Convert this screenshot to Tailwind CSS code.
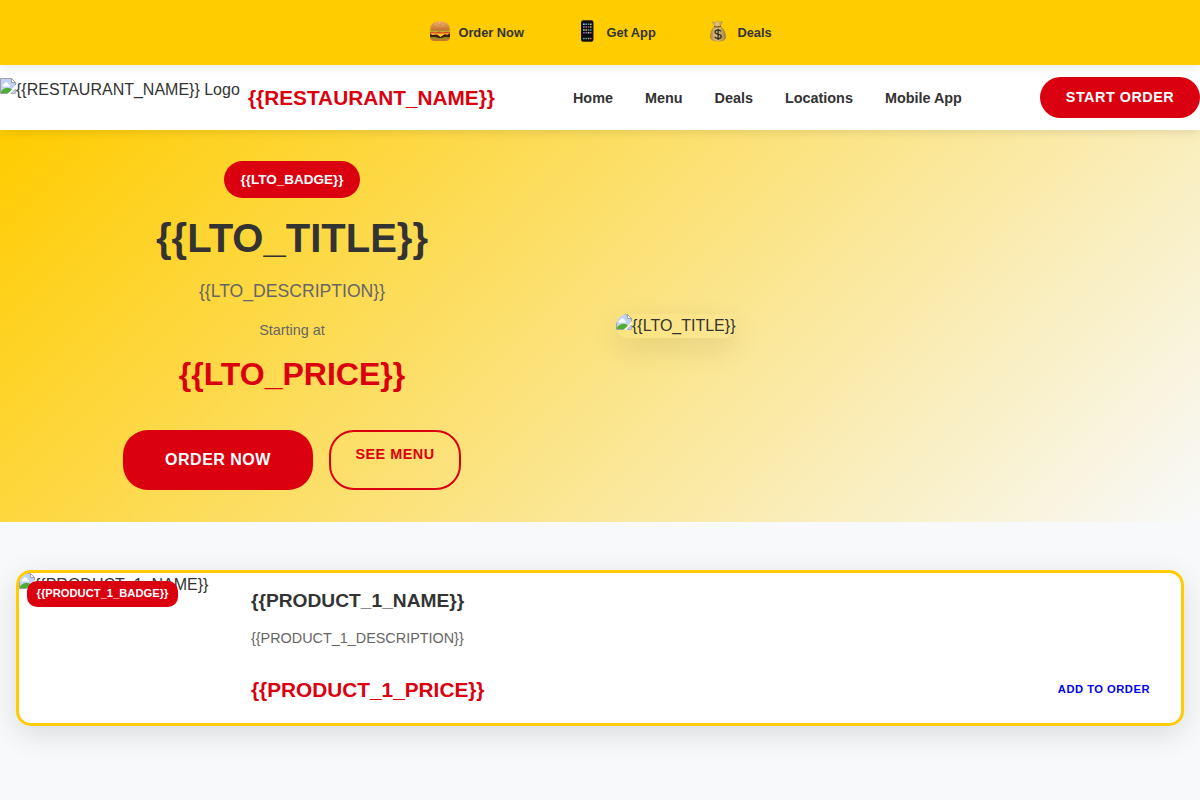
<!DOCTYPE html>
<html lang="en">
<head>
<meta charset="utf-8">
<title>{{RESTAURANT_NAME}}</title>
<script src="https://cdn.jsdelivr.net/npm/@tailwindcss/browser@4"></script>
</head>
<body class="bg-[#f8f9fa] font-['Liberation_Sans',Arial,sans-serif] text-[#333333] text-base leading-6 overflow-hidden h-[800px]">
<svg class="absolute w-0 h-0" aria-hidden="true">
  <symbol id="broken" viewBox="0 0 16 16">
    <path d="M0.5 0.5H11.5L15.5 4.5V7.500L7.500 15.500H0.5Z" fill="#c0d3f5"/>
    <path d="M2.500 8.500Q2 6.500 4 6.200Q4.500 4 6.500 4.300Q8.500 4.500 8.500 6.500Q10.500 6.800 10 8.500Z" fill="#fff"/>
    <path d="M1 15.200V13.500Q4 9.800 7.500 9.800Q10.500 10 12 11.500L8 15.200Z" fill="#4caf32"/>
    <path d="M0.500 15.500V0.500H11.500L15.500 4.500V7M0.500 15.500H7.500" fill="none" stroke="#a0a0a0"/>
    <path d="M11.500 0.500V4.500H15.500Z" fill="#fff" stroke="#a0a0a0"/>
    <path d="M8 16L16 8V10.500L10.500 16Z" fill="#fff"/>
    <path d="M11 15.500L15.500 11V15.500Z" fill="#c0d3f5" stroke="#a0a0a0" stroke-width=".7"/>
  </symbol>
  <linearGradient id="bunFill" x2="0" y2="1"><stop stop-color="#efad62"/><stop offset="1" stop-color="#c06f2a"/></linearGradient>
  <linearGradient id="bagFill" x2="1" y2="0"><stop stop-color="#b48a45"/><stop offset=".45" stop-color="#e3c684"/><stop offset="1" stop-color="#a67b3b"/></linearGradient>
</svg>
<div class="relative z-30 h-[65px] bg-[#ffcc00] shadow-[0_2px_10px_rgba(0,0,0,0.1)] flex justify-center items-center text-[12.8px] font-bold leading-5">
  <div class="flex items-center gap-[7px] w-[148px]">
    <svg class="w-[22px] h-[22px] ml-px -mt-1" viewBox="0 0 22 22">
      <path d="M1.200 15.500H20.800V18Q20.300 21 17 21H5Q1.700 21 1.200 18Z" fill="#c8772f"/>
      <path d="M1 13.300H21V16.500Q20 18.500 17 18.500H5Q2 18.500 1 16.500Z" fill="#3f1c0c"/>
      <path d="M1 12.800H21L18.500 14.800L15.500 14.200L11.500 17L8 14.500L3 15Z" fill="#ffc52c"/>
      <path d="M.8 11.500Q11 10.500 21.200 11.500Q21.500 13 20 13.200Q11 13.800 2 13.200Q.5 13 .8 11.500Z" fill="#d84a28"/>
      <path d="M.6 10.300Q11 8.800 21.400 10.300L20.500 12L17 11.700L14 12.400L10 11.600L6 12.400L3 11.600L1.200 12.200Z" fill="#b9b436"/>
      <path d="M1.500 17.400Q5 16.400 8 17.400T14 17.400T20.500 17.400L18 18.700H4Z" fill="#8fa62b"/>
      <path d="M1.200 9.500Q1.300 1.200 11 1.200T20.800 9.500Q20.500 10.800 18.500 10.800H3.500Q1.500 10.800 1.200 9.500Z" fill="url(#bunFill)"/>
      <path d="M6 4.500l.8-.3M10 3l.9.1M14 4.300l.8.3M8.500 6l.8-.2M12.500 6l.8.100" stroke="#ffe1aa" stroke-width=".7"/>
    </svg><span>Order Now</span></div>
  <div class="flex items-center gap-2 w-[131px]">
    <svg class="w-[22px] h-[22px] -mt-1" viewBox="0 0 22 22">
      <rect x="5" y=".3" width="12.500" height="21.400" rx="2.200" fill="#17171a"/>
      <rect x="6" y="1.600" width="10.500" height="18.800" rx="1" fill="#080b12"/>
      <path d="M7 4.200h1.700M14 4.200h1.600M7 10h1.700M11.700 12.800h1.700" stroke="#b8c2c6" stroke-width="1.500"/>
      <path d="M9.300 4.200H11M7 7.100h1.700M14 9.900h1.600M9.300 18.500H11" stroke="#3698d8" stroke-width="1.500"/>
      <path d="M11.700 4.200h1.700M11.700 10h1.700M7 18.500h1.700" stroke="#4fab63" stroke-width="1.500"/>
      <path d="M9.300 7.100H11M14 12.800h1.600M14 18.500h1.600" stroke="#d25450" stroke-width="1.500"/>
      <path d="M14 7.100h1.600M9.300 10H11M11.700 18.500h1.700" stroke="#d7a746" stroke-width="1.500"/>
      <path d="M11.700 7.100h1.700M7 12.800h1.700M9.300 12.800H11" stroke="#8063a6" stroke-width="1.500"/>
    </svg><span>Get App</span></div>
  <div class="flex items-center gap-2">
    <svg class="w-[22px] h-[22px] -mt-1" viewBox="0 0 22 22">
      <path d="M7.500 6Q6 3 5.500 1.800L8.500 2.500L10.500 1L12.500 2.200L15.500 1.500L13.500 6Q19 11 18.800 17Q18.800 21.200 11 21.200T3.200 17Q3 11 7.500 6Z" fill="url(#bagFill)" stroke="#916b31" stroke-width=".3"/>
      <path d="M7.200 6.300Q10.500 7.500 14 6.200" fill="none" stroke="#7e5525" stroke-width="1.300"/>
      <path d="M14 11.300Q13 10 11 10Q8.200 10 8.200 12Q8.200 13.700 11.100 14.200Q14.200 14.700 14.200 16.400Q14.200 18.500 11.200 18.500Q8.800 18.500 7.800 16.900M11.100 8.700V19.900" fill="none" stroke="#37352b" stroke-width="1.400"/>
    </svg><span>Deals</span></div>
</div>
<header class="relative z-20 h-[65px] bg-white shadow-[0_2px_10px_rgba(0,0,0,0.1)] flex items-center justify-between">
  <div class="flex items-center gap-2">
    <div class="flex h-10 w-60 whitespace-nowrap"><svg class="w-4 h-4 shrink-0"><use href="#broken"/></svg><span>{{RESTAURANT_NAME}} Logo</span></div>
    <span class="text-[20.8px] font-bold text-[#db0010]">{{RESTAURANT_NAME}}</span>
  </div>
  <nav class="flex gap-8 text-[14.4px] font-bold"><span>Home</span><span>Menu</span><span>Deals</span><span>Locations</span><span>Mobile App</span></nav>
  <div class="h-[41px] w-40 rounded-[25px] bg-[#db0010] text-white text-[14.4px] font-bold tracking-[0.5px] text-center leading-10">START ORDER</div>
</header>
<section class="h-[392px] py-8 grid grid-cols-2 gap-8 items-center bg-[linear-gradient(135deg,#ffcc00_0%,#f8f9fa_100%)]">
  <div class="flex flex-col items-center h-[328px]">
    <div class="-mt-px h-[37px] w-[136px] rounded-[20px] bg-[#db0010] text-white text-[13.5px] font-bold text-center leading-[37px]">{{LTO_BADGE}}</div>
    <h1 class="mt-4 text-[40px] leading-12 font-bold">{{LTO_TITLE}}</h1>
    <p class="mt-4 text-[17.6px] leading-[26px] text-[#666666]">{{LTO_DESCRIPTION}}</p>
    <p class="mt-[15px] text-[14.4px] leading-[22px] text-[#666666]">Starting at</p>
    <p class="mt-[9px] text-[32px] leading-12 font-bold text-[#db0010]">{{LTO_PRICE}}</p>
    <div class="mt-8 flex gap-4 font-bold text-center">
      <div class="h-[60px] w-[190px] rounded-[25px] bg-[#db0010] text-white text-base leading-[59px] tracking-[0.5px]">ORDER NOW</div>
      <div class="h-[60px] w-[132px] rounded-[25px] border-2 border-[#db0010] text-[#db0010] text-[14.4px] leading-[45px] tracking-[0.5px]">SEE MENU</div>
    </div>
  </div>
  <div class="flex w-[120px] h-6 rounded-[15px] shadow-[0_10px_30px_rgba(0,0,0,0.1)] whitespace-nowrap"><svg class="w-4 h-4 shrink-0 rounded-tl-[12px]"><use href="#broken"/></svg><span>{{LTO_TITLE}}</span></div>
</section>
<main class="pt-12 px-4">
  <article class="relative h-[156px] rounded-[15px] border-3 border-[#ffcc00] bg-white shadow-[0_8px_30px_rgba(0,0,0,0.12)] flex">
    <div class="flex w-[232px] whitespace-nowrap"><svg class="w-4 h-4 shrink-0 rounded-tl-[12px]"><use href="#broken"/></svg><span>{{PRODUCT_1_NAME}}</span></div>
    <div class="absolute left-2 top-2 h-[26px] w-[151px] rounded-[10px] bg-[#db0010] text-white text-[11.2px] font-bold text-center leading-[25px]">{{PRODUCT_1_BADGE}}</div>
    <div class="flex-1 pt-[13px] pr-[31px]">
      <h3 class="text-[19.2px] leading-[30px] font-bold">{{PRODUCT_1_NAME}}</h3>
      <p class="mt-[11px] text-[14.4px] leading-[22px] text-[#666666]">{{PRODUCT_1_DESCRIPTION}}</p>
      <div class="mt-[23px] flex items-center justify-between leading-8 font-bold"><span class="pt-0.5 text-[20.8px] text-[#db0010]">{{PRODUCT_1_PRICE}}</span><span class="text-[11.2px] text-[#0000ee] tracking-[0.5px]">ADD TO ORDER</span></div>
    </div>
  </article>
</main>
</body>
</html>
